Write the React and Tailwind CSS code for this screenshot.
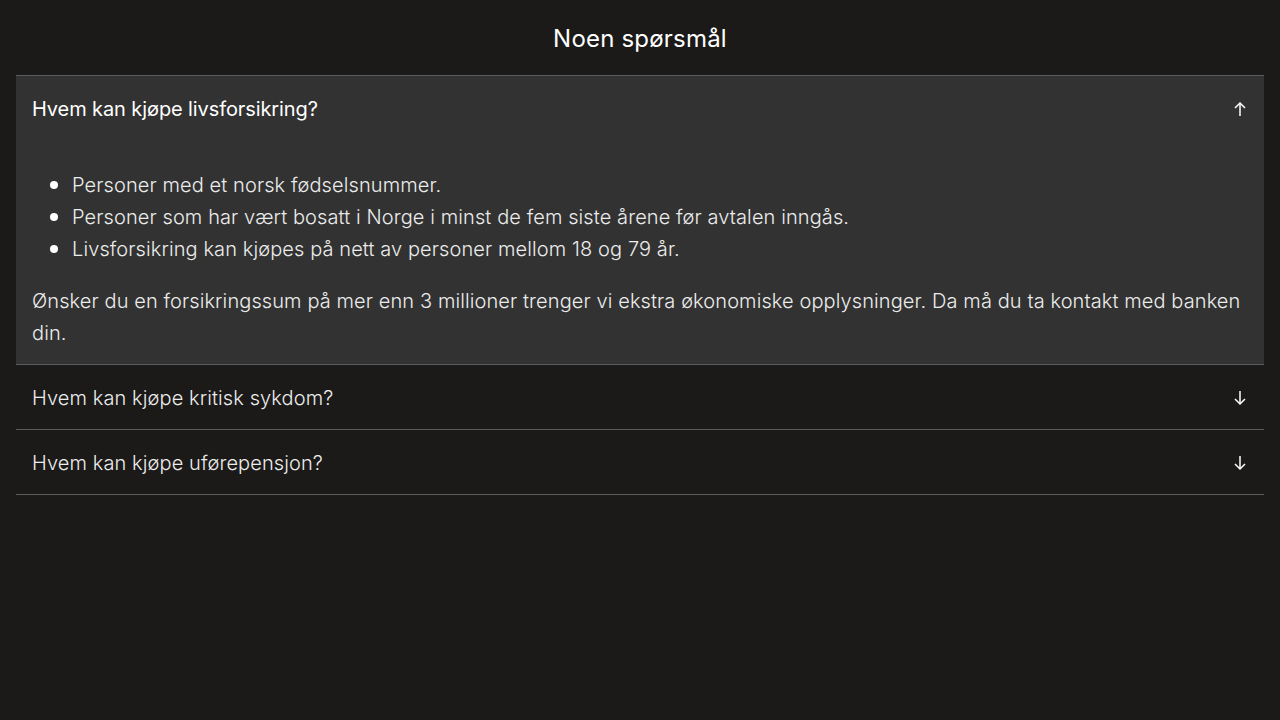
import { useState } from "react";

const items = [
  {
    q: "Hvem kan kjøpe livsforsikring?",
    list: [
      "Personer med et norsk fødselsnummer.",
      "Personer som har vært bosatt i Norge i minst de fem siste årene før avtalen inngås.",
      "Livsforsikring kan kjøpes på nett av personer mellom 18 og 79 år.",
    ],
    text: "Ønsker du en forsikringssum på mer enn 3 millioner trenger vi ekstra økonomiske opplysninger. Da må du ta kontakt med banken din.",
  },
  { q: "Hvem kan kjøpe kritisk sykdom?" },
  { q: "Hvem kan kjøpe uførepensjon?" },
];

function Arrow({ up }) {
  return (
    <svg width="14" height="16" viewBox="0 0 14 16" fill="none" stroke="currentColor" strokeWidth="1.5" className={up ? "" : "rotate-180"}>
      <path d="M7 15V2" />
      <path d="M2 7l5-5 5 5" />
    </svg>
  );
}

export default function App() {
  const [open, setOpen] = useState(0);

  return (
    <div
      className="min-h-screen bg-[#1b1a18] text-[#ececec] px-4 pt-[22px]"
      style={{ fontFamily: "Inter, 'Noto Sans', sans-serif" }}
    >
      <h2 className="text-center text-[24px] leading-[34px] font-normal tracking-[0.2px] text-white mb-[19px]">
        Noen spørsmål
      </h2>

      <div className="border-t border-[#5c5c5c]">
        {items.map((it, i) => {
          const isOpen = open === i;
          return (
            <div key={i} className={`border-b border-[#5c5c5c] ${isOpen ? "bg-[#323232]" : ""}`}>
              <button
                type="button"
                onClick={() => setOpen(isOpen ? -1 : i)}
                className="w-full flex items-center justify-between px-4 pt-[17px] pb-[15px] text-left"
              >
                <span className={`text-[20px] leading-8 ${isOpen ? "font-normal text-white tracking-[-0.1px]" : "font-light tracking-[0.1px]"}`}>
                  {it.q}
                </span>
                <span className="mr-[1px] text-white">
                  <Arrow up={isOpen} />
                </span>
              </button>
              {isOpen && it.list && (
                <div className="px-4 pt-[29px] pb-[15px] text-[20px] leading-8 font-light tracking-[0.1px]">
                  <ul>
                    {it.list.map((l) => (
                      <li key={l} className="flex items-center">
                        <span className="w-10 shrink-0 flex">
                          <span className="ml-[18px] w-2 h-2 rounded-full bg-white" />
                        </span>
                        <span>{l}</span>
                      </li>
                    ))}
                  </ul>
                  <p className="mt-5">{it.text}</p>
                </div>
              )}
            </div>
          );
        })}
      </div>
    </div>
  );
}
